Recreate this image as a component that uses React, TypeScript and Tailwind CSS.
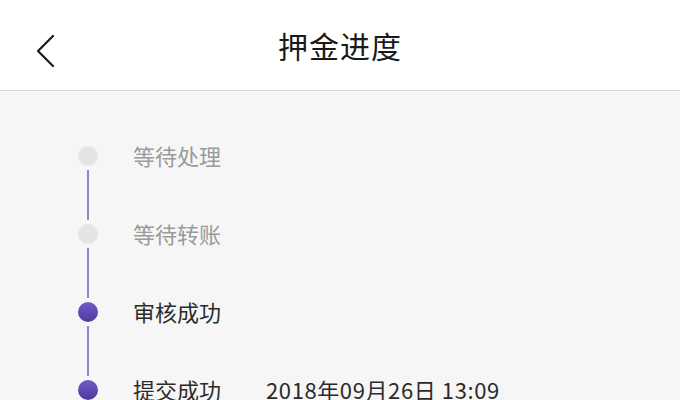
import React from 'react';

type Step = { label: string; done: boolean; time?: string };

const steps: Step[] = [
  { label: '等待处理', done: false },
  { label: '等待转账', done: false },
  { label: '审核成功', done: true },
  { label: '提交成功', done: true, time: '2018年09月26日 13:09' },
];

export default function App() {
  return (
    <div
      className="w-[680px] h-[400px] overflow-hidden bg-[#f6f6f6]"
      style={{ fontFamily: '"Noto Sans CJK SC", "Noto Sans", sans-serif' }}
    >
      <header className="relative h-[91px] bg-white border-b border-[#d8d8d8] flex items-center justify-center">
        <button className="absolute left-[32px] top-[33px] w-[26px] h-[36px] flex items-center justify-center">
          <svg width="22" height="34" viewBox="0 0 22 34" fill="none">
            <path d="M19 2 L4 17 L19 32" stroke="#1a1a1a" strokeWidth="2.2" strokeLinecap="round" strokeLinejoin="round" />
          </svg>
        </button>
        <h1 className="text-[30px] text-[#1a1a1a] leading-none tracking-[1px]">押金进度</h1>
      </header>

      <main className="pt-[26px] pl-[78px]">
        {steps.map((step, i) => (
          <div key={step.label} className="flex h-[78px]">
            <div className="w-[20px] flex flex-col items-center">
              <div className={`flex-1 w-[1.5px] mb-[4px] ${i === 0 ? 'bg-transparent' : 'bg-[#9087c6]'}`} />
              <div
                className={`w-[20px] h-[20px] rounded-full ${
                  step.done ? 'bg-gradient-to-b from-[#7259c9] to-[#4c3b9c]' : 'bg-[#e4e4e4]'
                }`}
              />
              <div className={`flex-1 w-[1.5px] mt-[4px] ${i === steps.length - 1 ? 'bg-transparent' : 'bg-[#9087c6]'}`} />
            </div>
            <div className="flex items-center ml-[35px] pb-[2px] text-[22px] leading-none">
              <span className={step.done ? 'text-[#2b2b2b]' : 'text-[#9a9a9a]'}>{step.label}</span>
              {step.time && <span className="ml-[45px] tracking-[0.6px] text-[#2b2b2b]">{step.time}</span>}
            </div>
          </div>
        ))}
      </main>
    </div>
  );
}
